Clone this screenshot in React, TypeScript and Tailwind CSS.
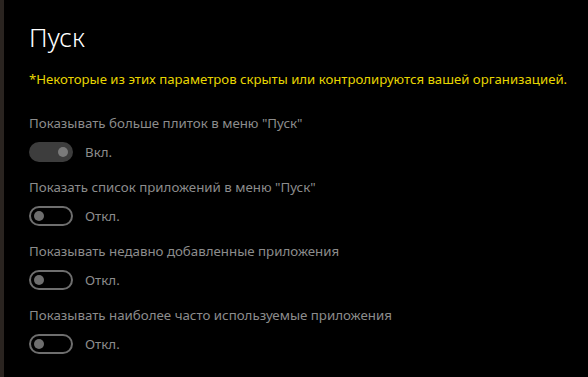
const settings = [
  { label: 'Показывать больше плиток в меню "Пуск"', on: true },
  { label: 'Показать список приложений в меню "Пуск"', on: false },
  { label: "Показывать недавно добавленные приложения", on: false },
  { label: "Показывать наиболее часто используемые приложения", on: false },
];

const Toggle = ({ on }: { on: boolean }) =>
  on ? (
    <div className="w-[44px] h-[20px] rounded-full bg-[#3d3d3d] flex items-center justify-end pr-[5px]">
      <div className="w-[10px] h-[10px] rounded-full bg-[#7a7a7a]" />
    </div>
  ) : (
    <div className="w-[44px] h-[20px] rounded-full border-2 border-[#6e6e6e] flex items-center pl-[3px]">
      <div className="w-[10px] h-[10px] rounded-full bg-[#6e6e6e]" />
    </div>
  );

export default function App() {
  return (
    <div
      className="w-[588px] h-[377px] bg-black flex overflow-hidden"
      style={{ fontFamily: '"Noto Sans", "Open Sans", sans-serif' }}
    >
      <div className="w-[4px] h-full bg-[#2a2420]" />
      <div className="flex-1 pl-[25px] pt-[20px]">
        <h1 className="text-[26px] font-light text-white leading-[34px]">Пуск</h1>
        <p className="mt-[15px] text-[13.2px] leading-[20px] text-[#e8d600] whitespace-nowrap">
          *Некоторые из этих параметров скрыты или контролируются вашей организацией.
        </p>
        <div className="mt-[24px] flex flex-col gap-[15px]">
          {settings.map((s) => (
            <div key={s.label}>
              <div className="text-[13.3px] leading-[20px] text-[#8c8c8c]">{s.label}</div>
              <div className="mt-[9px] flex items-center gap-[12px]">
                <Toggle on={s.on} />
                <span className="text-[13.3px] leading-[20px] text-[#8c8c8c]">
                  {s.on ? "Вкл." : "Откл."}
                </span>
              </div>
            </div>
          ))}
        </div>
      </div>
    </div>
  );
}
